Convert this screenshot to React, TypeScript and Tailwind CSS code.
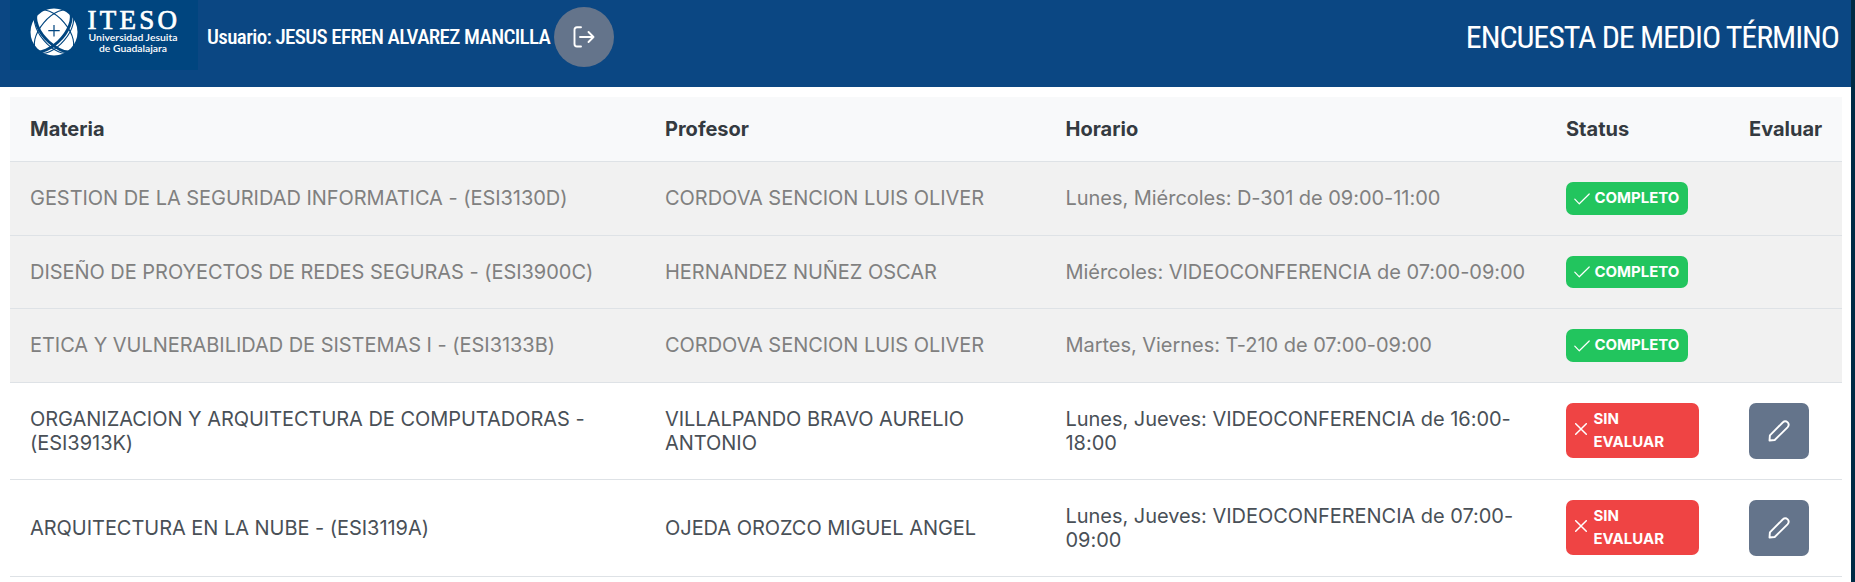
import React from "react";

type Row = { materia: string; profesor: string; horario: string; done: boolean; h: string };

const rows: Row[] = [
  { materia: "GESTION DE LA SEGURIDAD INFORMATICA - (ESI3130D)", profesor: "CORDOVA SENCION LUIS OLIVER", horario: "Lunes, Miércoles: D-301 de 09:00-11:00", done: true, h: "h-[74px]" },
  { materia: "DISEÑO DE PROYECTOS DE REDES SEGURAS - (ESI3900C)", profesor: "HERNANDEZ NUÑEZ OSCAR", horario: "Miércoles: VIDEOCONFERENCIA de 07:00-09:00", done: true, h: "h-[73px]" },
  { materia: "ETICA Y VULNERABILIDAD DE SISTEMAS I - (ESI3133B)", profesor: "CORDOVA SENCION LUIS OLIVER", horario: "Martes, Viernes: T-210 de 07:00-09:00", done: true, h: "h-[74px]" },
  { materia: "ORGANIZACION Y ARQUITECTURA DE COMPUTADORAS - (ESI3913K)", profesor: "VILLALPANDO BRAVO AURELIO ANTONIO", horario: "Lunes, Jueves: VIDEOCONFERENCIA de 16:00-18:00", done: false, h: "h-[97px]" },
  { materia: "ARQUITECTURA EN LA NUBE - (ESI3119A)", profesor: "OJEDA OROZCO MIGUEL ANGEL", horario: "Lunes, Jueves: VIDEOCONFERENCIA de 07:00-09:00", done: false, h: "h-[97px]" },
];

const cols = "grid grid-cols-[635px_400.5px_500.5px_183px_113px] items-center border-b border-[#dee2e6]";

function Logo() {
  return (
    <svg className="block h-[70px] w-[188px] shrink-0 bg-[#00457f]" viewBox="10 0 188 70">
      <circle cx="54" cy="32" r="23.5" fill="#fff" />
      <g fill="none" stroke="#00457f">
        <ellipse cx="54" cy="31.500" rx="26" ry="13.500" strokeWidth="1.100" transform="rotate(50 54 31.500)" />
        <ellipse cx="54" cy="31.500" rx="26" ry="13.500" strokeWidth="1.100" transform="rotate(-50 54 31.500)" />
        <path d="M69 10C75 18 68 33 58 42 51 49 41 53 35 52" strokeWidth="2.800" />
        <path d="M38 11C32 19 39 33 49 42 57 49 66 54 73 51" strokeWidth="2.800" />
      </g>
      <path d="M54 25v11.500M48.300 30.700h11.400" stroke="#00457f" strokeWidth="1.200" />
      <text x="87.500" y="29.300" fill="#fff" stroke="#fff" strokeWidth="0.700" fontFamily="Liberation Serif, serif" fontSize="27" textLength="89.500" lengthAdjust="spacing">ITESO</text>
      <text x="88.500" y="41" fill="#fff" fontFamily="Lato, sans-serif" fontWeight="600" fontSize="8.500" textLength="89" lengthAdjust="spacingAndGlyphs">Universidad Jesuita</text>
      <text x="99" y="52" fill="#fff" fontFamily="Lato, sans-serif" fontWeight="600" fontSize="8.500" textLength="68" lengthAdjust="spacingAndGlyphs">de Guadalajara</text>
    </svg>
  );
}

function Badge({ done, short }: { done: boolean; short: boolean }) {
  return done ? (
    <span className={`flex ${short ? "h-8" : "h-[33px]"} w-[122px] items-center rounded-[7px] bg-[#22c55e] pl-[7.5px] text-[15px] leading-[22px] font-bold text-white`}>
      <svg className="mr-[5px] size-4" viewBox="0 0 16 16" fill="none" stroke="currentColor" strokeWidth="1.200" strokeLinecap="round" strokeLinejoin="round">
        <path d="M.8 8.200 5.300 12.800 15.200 3" />
      </svg>
      <span className="pb-px">COMPLETO</span>
    </span>
  ) : (
    <span className="mb-0.5 flex h-[55px] w-[133px] items-center rounded-[7px] bg-[#ef4444] pl-[9px] text-[15px] leading-[23px] font-bold text-white">
      <svg className="mr-[6.5px] mb-0.5 size-3" viewBox="0 0 12 12" fill="none" stroke="currentColor" strokeWidth="1.500" strokeLinecap="round">
        <path d="M.7.7 11.300 11.300M11.300.7.7 11.300" />
      </svg>
      <span className="w-[80px] tracking-normal">SIN EVALUAR</span>
    </span>
  );
}

export default function App() {
  return (
    <div className="flex h-[582px] w-[1855px] overflow-hidden bg-[#002b45] font-['Inter',sans-serif] text-[20px] leading-6 text-[#495057]">
      <main className="w-[1851px] bg-white">
        <header className="flex h-[87px] items-start bg-[#0b4783] pl-[10px] font-['Roboto_Condensed','Roboto',sans-serif] text-white">
          <Logo />
          <p className="ml-[9px] w-[347px] text-[21px] leading-[75px] font-medium tracking-[-0.63px] whitespace-nowrap">Usuario: JESUS EFREN ALVAREZ MANCILLA</p>
          <button className="mt-[7px] flex size-[60px] items-center justify-center rounded-full bg-[#64748b]" aria-label="Salir">
            <svg className="size-[22px]" viewBox="0 0 22 22" fill="none" stroke="#fff" strokeWidth="1.900" strokeLinecap="round" strokeLinejoin="round">
              <path d="M8 1.200H4Q1.500 1.200 1.500 3.700V18Q1.500 20.500 4 20.500H8M7 11H20.500M15.500 6 20.500 11 15.500 16" />
            </svg>
          </button>
          <h1 className="ml-auto mr-[12px] text-[32px] leading-[75px] tracking-[-1.08px] whitespace-nowrap">ENCUESTA DE MEDIO TÉRMINO</h1>
        </header>
        <section className="mt-[10px] ml-[10px] w-[1832px]">
          <div className={`${cols} h-[65px] bg-[#f8f9fa] font-bold text-[#343a40]`}>
            {["Materia", "Profesor", "Horario", "Status", "Evaluar"].map((t) => (
              <div key={t} className="pl-5">{t}</div>
            ))}
          </div>
          {rows.map((r, i) => (
            <div key={r.materia} className={`${cols} ${r.h} tracking-[-0.04px] ${r.done ? "bg-[#f1f1f1] text-[#808080]" : "bg-white"}`}>
              <div className={`px-5 ${r.h === "h-[74px]" ? "pb-0.5" : ""}`}>{r.materia}</div>
              <div className={`px-5 ${r.h === "h-[74px]" ? "pb-0.5" : ""}`}>{r.profesor}</div>
              <div className={`pr-4 pl-5 ${r.h === "h-[74px]" ? "pb-0.5" : ""}`}>{r.horario}</div>
              <div className="pl-5"><Badge done={r.done} short={i === 1} /></div>
              <div className="pl-5">
                {!r.done && (
                  <button className="flex h-14 w-[60px] items-center justify-center rounded-[7px] bg-[#64748b]" aria-label="Evaluar">
                    <svg className="size-[22px]" viewBox="0 0 22 22" fill="none" stroke="#fff" strokeWidth="1.900" strokeLinejoin="round">
                      <path d="M1.500 20.500 1.900 15.400 14.700 2.500Q17.200.2 19.700 2.400 21.800 4.800 19.500 7.300L6.700 20Z" />
                    </svg>
                  </button>
                )}
              </div>
            </div>
          ))}
        </section>
      </main>
    </div>
  );
}
